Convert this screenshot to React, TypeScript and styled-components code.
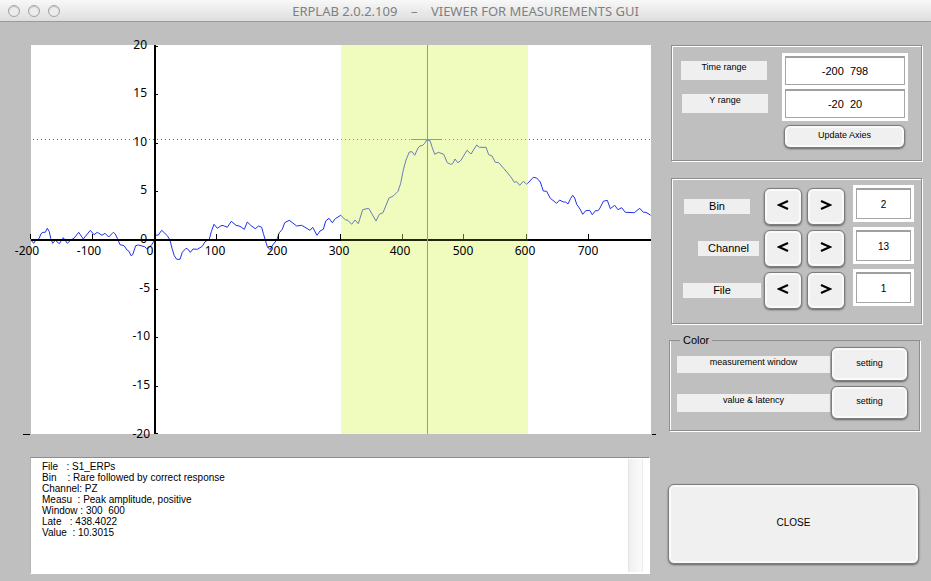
import React from "react";
import styled, { createGlobalStyle } from "styled-components";

const GlobalStyle = createGlobalStyle`
  * { box-sizing: border-box; }
  body {
    margin: 0;
    background: #bfbfbf;
    color: #000;
    font-family: "Liberation Sans", Arial, sans-serif;
    font-size: 11px;
  }
  button, input, textarea { font: inherit; color: inherit; margin: 0; }
`;

const Window = styled.div`
  display: flex;
  flex-direction: column;
  min-height: 100vh;
`;

const TitleBar = styled.header`
  display: grid;
  grid-template-columns: 1fr auto 1fr;
  align-items: center;
  height: 22px;
  padding: 0 8px;
  background: linear-gradient(#f8f8f8, #dedede);
  border-bottom: 1px solid #9b9b9b;
`;

const Lights = styled.div`
  display: flex;
  gap: 8px;
`;

const Light = styled.button`
  width: 12px;
  height: 12px;
  padding: 0;
  border: 1px solid #a4a4a4;
  border-radius: 50%;
  background: #ececec;
  box-shadow: inset 0 1px 1px #c4c4c4;
`;

const Title = styled.h1`
  margin: 0;
  font: 400 13px/20px "Noto Sans", sans-serif;
  color: #808080;
  white-space: pre;
`;

const Content = styled.main`
  display: grid;
  flex: 1;
  grid-template-columns: minmax(0, 1fr) 255px;
  gap: 8px;
  padding: 8px 8px 7px 12px;
`;

const PlotColumn = styled.section`
  display: flex;
  flex-direction: column;
  gap: 15px;
`;

const Plot = styled.svg`
  display: block;
  width: 100%;
  height: auto;
  text {
    font: 12px "Noto Sans", sans-serif;
    fill: #000;
  }
`;

const LogBox = styled.div`
  display: flex;
  flex: 1;
  margin: 0 10px 0 18px;
  padding-right: 6px;
  background: #fff;
  border: 1px solid #b4b4b4;
  border-top-color: #8c8c8c;
  border-right-color: #fff;
  border-bottom-color: #fff;
`;

const Log = styled.textarea`
  flex: 1;
  padding: 3px 11px;
  border: 0;
  resize: none;
  outline: none;
  background: transparent;
  font-size: 10px;
  line-height: 11px;
  overflow: hidden;
`;

const ScrollTrack = styled.div`
  width: 15px;
  margin: 1px 0;
  background: linear-gradient(90deg, #f0f0f0, #fbfbfb);
  border-left: 1px solid #e4e4e4;
  border-right: 1px solid #ececec;
`;

const Controls = styled.aside`
  display: flex;
  flex-direction: column;
  padding-top: 15px;
`;

const Panel = styled.fieldset<{ $pad: string; $gap: number }>`
  display: flex;
  flex-direction: column;
  gap: ${(p) => p.$gap}px;
  min-width: 0;
  margin: 0 1px 17px 3px;
  padding: ${(p) => p.$pad};
  border: 1px solid #8e8e8e;
  box-shadow: 1px 1px 0 #fff, inset 1px 1px 0 #fff;
`;

const ColorPanel = styled.fieldset`
  min-width: 0;
  margin: -7px 3px 0 1px;
  padding: 0 11px 11px 7px;
  border: 1px solid #8e8e8e;
  box-shadow: 1px 1px 0 #fff, inset 1px 0 0 #fff;
`;

const Legend = styled.legend`
  margin-left: 3px;
  padding: 0 3px;
  background: #bfbfbf;
  line-height: 13px;
`;

const Row = styled.div<{ $height: number; $above?: number }>`
  display: flex;
  align-items: center;
  justify-content: flex-end;
  height: ${(p) => p.$height}px;
  margin-top: ${(p) => p.$above ?? 0}px;
`;

const Tag = styled.label<{ $width: number; $height: number; $line: number; $small?: boolean; $right?: number }>`
  width: ${(p) => p.$width}px;
  height: ${(p) => p.$height}px;
  margin-right: ${(p) => p.$right ?? 0}px;
  background: #efefef;
  text-align: center;
  font-size: ${(p) => (p.$small ? 9 : 11)}px;
  line-height: ${(p) => p.$line}px;
`;

const Field = styled.input<{ $width: number }>`
  width: ${(p) => p.$width}px;
  height: 100%;
  padding: 0;
  border: 1px solid #a6a6a6;
  border-top: 2px solid #a0a0a0;
  outline: 3px solid #fff;
  outline-offset: 0;
  background: #fff;
  text-align: center;
`;

const CountField = styled(Field)`
  align-self: flex-start;
  height: 31px;
  margin-left: 6px;
  font-size: 10px;
`;

const PushButton = styled.button<{ $width?: number }>`
  width: ${(p) => (p.$width ? `${p.$width}px` : "auto")};
  height: 100%;
  padding: 0 0 3px;
  border: 1px solid #7d7d7d;
  border-radius: 6px;
  background: #f0f0f0;
  box-shadow: inset 0 0 0 2px #fafafa, 0 1px 2px rgba(0, 0, 0, 0.5);
  font-size: 9px;
`;

const StepButton = styled(PushButton)`
  margin-right: 5px;
  svg { display: block; margin: 0 auto; }
`;

const UpdateRow = styled.div`
  display: flex;
  justify-content: flex-end;
  height: 23px;
  margin-top: 3px;
`;

const CloseButton = styled(PushButton)`
  height: 80px;
  margin: 53px 4px 0 0;
  font-size: 10px;
`;

const wave =
  "30.7,239.7 33.7,243.3 35.3,240.7 39,238.7 41,233.7 43,232.3 45.3,232.3 47.3,228.3 49.3,231.7 50.7,238.3 52.7,243.3 55.3,240.3 59.3,243.7 63.3,237.7 67.3,243.3 70.7,240 74,238.3 78.7,232.3 83.3,239 90.3,230.3 94,234.7 97.3,232.3 102,235.3 105,233.3 108.7,237 113.3,232.3 115.3,234 117.3,238.3 120,244.7 124,245.7 127.3,250.3 129,251.3 131,255.7 132.7,254.7 135.7,245.7 138.3,245 144.7,246.7 146.7,248.7 149.3,247.3 151.7,244.7 154.7,240 " +
  "155.7,235.3 158.3,235 161.7,230.3 167.3,235.7 170,240 172,248.3 174.3,255.7 176.7,259.3 180,259.3 182.3,252.3 186,248.3 187.7,249 190.3,252.3 193,249 197.3,249.3 202.3,246.3 205,241.7 209.3,239.3 211.3,231.7 214,224.3 217.3,228.3 221,225.7 223,225.5 227.3,227.3 231.3,221.3 236,225.3 240,226.3 244.3,229.3 247.3,222 250.7,225.3 255.3,228.7 258.7,226 261.7,227.3 263.3,233.3 265.3,240 267.3,246.7 270,249.7 272.7,245 276.7,240 279.3,232.7 282.3,229.3 284.7,222.7 289.3,220.3 296.7,226 301.7,225.3 310,230.3 312.7,227.3 317,235.3 320,231 323.3,229.3 325.7,221 329,218.3 332.3,222.7 335.3,218.7 340.7,215.3 " +
  "345.3,219.7 348,220.3 351.7,224.3 355,220 358.3,223.7 362.7,209.7 368.7,208.3 372,214 376,221 379.3,214.3 383,212.7 386,205.3 389,198 393.3,196 398,191.3 400.7,183.3 403.3,170 406,160 409.3,152 412,151.7 414.7,155.3 418,148 420,146 422.7,145.3 424.7,143.3 426.7,140 430,140.7 432.3,147.7 434.7,154.3 438.3,152.3 443.7,154.3 447.3,162.7 450.7,164.3 452.7,163.7 455,159 457.7,162.7 460.7,160.7 467,150.3 471,154 476.7,145 479.3,147.3 486,147.3 488.7,154.7 492,156 495.3,162.3 498.7,162.7 504,168.7 510.7,176.7 514.3,182.3 516.7,181.7 519.7,185.3 523.3,181.3 526.7,184.3 " +
  "533.3,177.3 536.7,178 540.3,182 543.3,191 546.7,191.3 550.3,198.3 556.7,203.3 559.7,200 563.3,202 565.7,202 568,204 570.7,198.3 572.7,195.3 574.7,198 576.7,204.3 580,209 582.7,214.3 585.7,210.7 589.7,210.3 592.3,214.7 595.3,210.7 598,210.7 600,208 603.3,201.3 607.3,200.3 610.3,208.7 614.7,205.3 618,209.7 621.7,207.7 625.3,212.3 634.3,212.7 639.7,208.3 643.3,212.3 646,212.3 650.7,215.3";

const yTicks = [
  { label: "20", y: 45 },
  { label: "15", y: 93 },
  { label: "10", y: 142 },
  { label: "5", y: 190 },
  { label: "0", y: 239 },
  { label: "-5", y: 288 },
  { label: "-10", y: 336 },
  { label: "-15", y: 385 },
  { label: "-20", y: 434 },
];

const xTicks = [
  { label: "-200", x: 31, at: 27 },
  { label: "-100", x: 93, at: 89 },
  { label: "0", x: 155, at: 150 },
  { label: "100", x: 217, at: 215 },
  { label: "200", x: 279, at: 277 },
  { label: "300", x: 341, at: 339 },
  { label: "400", x: 403, at: 400 },
  { label: "500", x: 464, at: 463 },
  { label: "600", x: 527, at: 525 },
  { label: "700", x: 589, at: 588 },
];

function ErpPlot() {
  return (
    <Plot viewBox="12 30 648 412" role="img" aria-label="ERP waveform">
      <rect x="31" y="45" width="620" height="389" fill="#fff" />
      <polyline points={wave} fill="none" stroke="#1f2ff0" strokeWidth="1" />
      <line x1="33" x2="651" y1="139.5" y2="139.5" stroke="#e03048" strokeDasharray="1 3" />
      <g shapeRendering="crispEdges">
        <rect x="31" y="239" width="620" height="2" />
        <rect x="154" y="45" width="2" height="389" />
        {xTicks.map((t) => (
          <rect key={t.label} x={t.x - 1} y="234" width="1" height="5" />
        ))}
        {yTicks.map((t) => (
          <rect key={t.label} x="156" y={Math.min(t.y + 1, 433)} width="2" height="1" />
        ))}
        <rect x="23" y="434" width="7" height="1" />
        <rect x="652" y="434" width="4" height="1" />
      </g>
      <rect x="341" y="45" width="187" height="389" fill="#d9f55c" fillOpacity="0.4" />
      <rect x="341" y="239" width="187" height="2" fill="#000" fillOpacity="0.6" />
      <g shapeRendering="crispEdges" fill="#ef8136">
        <rect x="427" y="45" width="1" height="389" />
        <rect x="411" y="139" width="31" height="1" />
      </g>
      {yTicks.map((t) => (
        <text key={t.label} x={Number(t.label) < 0 ? 150 : 147} y={t.y + 4} textAnchor="end">
          {t.label}
        </text>
      ))}
      {xTicks.map((t) => (
        <text key={t.label} x={t.at} y="255" textAnchor="middle">
          {t.label}
        </text>
      ))}
    </Plot>
  );
}

const report = [
  "File   : S1_ERPs",
  "Bin    : Rare followed by correct response",
  "Channel: PZ",
  "Measu  : Peak amplitude, positive",
  "Window : 300  600",
  "Late   : 438.4022",
  "Value  : 10.3015",
].join("\n");

const steppers = [
  { id: "bin", label: "Bin", value: "2", width: 66, right: 14 },
  { id: "channel", label: "Channel", value: "13", width: 61, right: 5 },
  { id: "file", label: "File", value: "1", width: 78, right: 3 },
];

function Chevron({ flip }: { flip?: boolean }) {
  return (
    <svg width="12" height="12" viewBox="0 0 12 12" aria-hidden="true">
      <path
        d={flip ? "M1 2 L10 6 L1 10" : "M11 2 L2 6 L11 10"}
        fill="none"
        stroke="#000"
        strokeWidth="2.2"
      />
    </svg>
  );
}

export default function App() {
  return (
    <Window>
      <GlobalStyle />
      <TitleBar>
        <Lights>
          <Light aria-label="Close window" />
          <Light aria-label="Minimize" />
          <Light aria-label="Zoom" />
        </Lights>
        <Title>{"ERPLAB 2.0.2.109    –    VIEWER FOR MEASUREMENTS GUI"}</Title>
      </TitleBar>
      <Content>
        <PlotColumn>
          <ErpPlot />
          <LogBox>
            <Log readOnly aria-label="Measurement report" defaultValue={report} />
            <ScrollTrack />
          </LogBox>
        </PlotColumn>
        <Controls>
          <Panel $pad="10px 16px 12px 8px" $gap={4}>
            <Row $height={29}>
              <Tag htmlFor="time" $width={86} $height={19} $line={13} $right={18} $small>Time range</Tag>
              <Field id="time" $width={120} defaultValue="-200  798" />
            </Row>
            <Row $height={29}>
              <Tag htmlFor="yrange" $width={86} $height={19} $line={13} $right={17} $small>Y range</Tag>
              <Field id="yrange" $width={120} defaultValue="-20  20" />
            </Row>
            <UpdateRow>
              <PushButton $width={121}>Update Axies</PushButton>
            </UpdateRow>
          </Panel>
          <Panel $pad="9px 10px 14px 8px" $gap={5}>
            {steppers.map((s) => (
              <Row key={s.id} $height={37}>
                <Tag htmlFor={s.id} $width={s.width} $height={15} $line={15} $right={s.right}>{s.label}</Tag>
                <StepButton $width={38} aria-label={`Previous ${s.label}`}><Chevron /></StepButton>
                <StepButton $width={38} aria-label={`Next ${s.label}`}><Chevron flip /></StepButton>
                <CountField id={s.id} $width={55} defaultValue={s.value} />
              </Row>
            ))}
          </Panel>
          <ColorPanel>
            <Legend>Color</Legend>
            <Row $height={34}>
              <Tag htmlFor="window-color" $width={153} $height={17} $line={13} $right={1} $small>measurement window</Tag>
              <PushButton id="window-color" $width={77}>setting</PushButton>
            </Row>
            <Row $height={33} $above={5}>
              <Tag htmlFor="value-color" $width={153} $height={18} $line={13} $right={1} $small>value &amp; latency</Tag>
              <PushButton id="value-color" $width={77}>setting</PushButton>
            </Row>
          </ColorPanel>
          <CloseButton>CLOSE</CloseButton>
        </Controls>
      </Content>
    </Window>
  );
}
